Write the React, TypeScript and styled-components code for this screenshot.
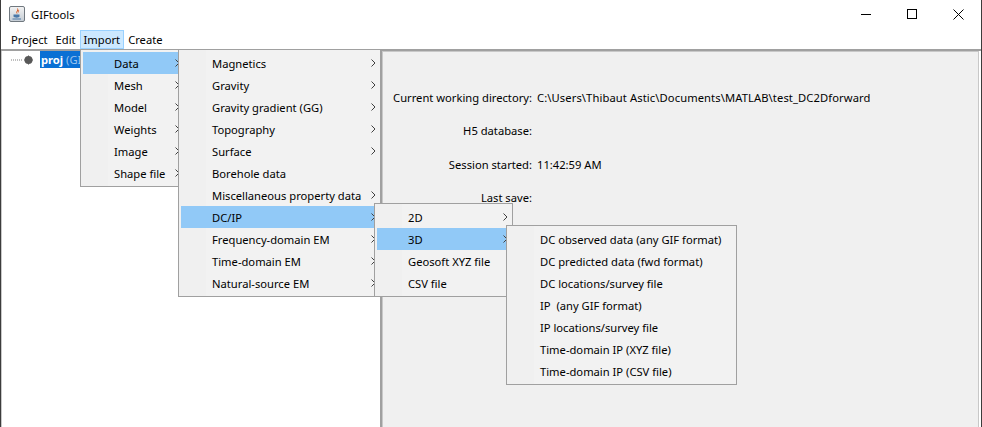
import React from "react";
import styled, { createGlobalStyle } from "styled-components";

const GlobalStyle = createGlobalStyle`
	html, body {
		margin: 0;
		padding: 0;
		background: #fff;
	}
	body {
		font-family: "Noto Sans", "Open Sans", sans-serif;
		font-size: 11.2px;
		color: #000;
	}
`;

const Window = styled.div`
	position: relative;
	width: 982px;
	height: 427px;
	box-sizing: border-box;
	display: flex;
	flex-direction: column;
	overflow: hidden;
	border-left: 1px solid #3c3c3c;
	border-right: 1px solid #3c3c3c;
	background: #fff;
`;

const TitleBar = styled.div`
	height: 30px;
	box-sizing: border-box;
	display: flex;
	align-items: center;
	padding: 0 0 2px 8px;
	flex: none;
`;

const Title = styled.span`
	margin-left: 6px;
`;

const WindowButtons = styled.div`
	margin-left: auto;
	display: flex;
`;

const WindowButton = styled.div`
	width: 46px;
	height: 28px;
	display: flex;
	align-items: center;
	justify-content: center;
`;

const MenuBar = styled.div`
	height: 19px;
	display: flex;
	align-items: center;
	padding-left: 6px;
	flex: none;
`;

const MenuTitle = styled.div<{ $open?: boolean }>`
	height: 19px;
	line-height: 18px;
	padding: 0 3px;
	box-sizing: border-box;
	border: 1px solid ${(p) => (p.$open ? "#99d1ff" : "transparent")};
	background: ${(p) => (p.$open ? "#cce8ff" : "transparent")};
`;

const Split = styled.div`
	flex: 1;
	display: flex;
	border-top: 2px solid #a0a0a0;
	min-height: 0;
`;

const TreePane = styled.div`
	width: 381px;
	box-sizing: border-box;
	flex: none;
	background: #fff;
	padding: 0 0 0 8px;
	border-left: 1px solid #c8c8c8;
	border-right: 2px solid #a0a0a0;
	display: flex;
	align-items: flex-start;
`;

const TreeRow = styled.div`
	display: flex;
	align-items: center;
	height: 17px;
`;

const TreeLabel = styled.span`
	background: #0a70d4;
	color: #fff;
	font-weight: 700;
	line-height: 17px;
	padding: 0 1px;
	margin-left: 1px;
`;

const TreeHint = styled.span`
	color: #9cc4ee;
	font-weight: 400;
`;

const InfoPane = styled.div`
	flex: 1;
	background: #f0f0f0;
	border: 1px solid #c8c8c8;
	border-bottom: none;
	margin-right: 2px;
	padding-top: 37px;
	display: flex;
	flex-direction: column;
`;

const InfoRow = styled.div`
	display: flex;
	height: 33.4px;
`;

const InfoLabel = styled.span`
	width: 149px;
	text-align: right;
	flex: none;
	line-height: 18px;
`;

const InfoValue = styled.span`
	margin-left: 5px;
	width: 333px;
	overflow: hidden;
	white-space: nowrap;
	line-height: 18px;
`;

const PathValue = styled(InfoValue)`
	letter-spacing: 0.1px;
`;

const Popup = styled.div<{ $left: number; $top: number; $width: number }>`
	position: absolute;
	left: ${(p) => p.$left}px;
	top: ${(p) => p.$top}px;
	width: ${(p) => p.$width}px;
	box-sizing: border-box;
	padding: 2px;
	background: linear-gradient(to right, #f0f0f0 27px, #f2f2f2 27px);
	border: 1px solid #a0a0a0;
`;

const Item = styled.div<{ $active?: boolean }>`
	position: relative;
	height: 22px;
	line-height: 24px;
	padding-left: 31px;
	white-space: pre;
	background: ${(p) => (p.$active ? "#91c9f7" : "transparent")};
`;

const Chevron = styled.svg`
	position: absolute;
	right: 2px;
	top: 7px;
	width: 5px;
	height: 8px;
`;

const Arrow = () => (
	<Chevron viewBox="0 0 5 8">
		<path d="M0.5 0.5L4 4L0.5 7.5" fill="none" stroke="#404040" strokeWidth="1" />
	</Chevron>
);

const JavaIcon = () => (
	<svg width="16" height="16" viewBox="0 0 16 16">
		<defs>
			<linearGradient id="frame" x1="0" y1="0" x2="0" y2="1">
				<stop offset="0" stopColor="#f4f4f4" />
				<stop offset="1" stopColor="#c4ccd4" />
			</linearGradient>
		</defs>
		<rect x="0.5" y="0.5" width="15" height="15" rx="1.5" fill="url(#frame)" stroke="#70787f" />
		<path d="M8.5 2.5C10 4.5 6.5 5.5 8 7.5M10 4C9 5 9 6 10 6.5" fill="none" stroke="#d9602a" strokeWidth="1" />
		<path d="M4.5 8.5H10.5V10.5C10.5 12 5 12 4.5 10.5Z" fill="#4a78a8" />
		<path d="M3.5 13H12" stroke="#4a78a8" strokeWidth="1" />
	</svg>
);

const TreeNode = () => (
	<svg width="29" height="12" viewBox="0 0 29 12">
		<path d="M1 6H13" stroke="#808080" strokeDasharray="1 1" />
		<circle cx="18.5" cy="6" r="4" fill="#585858" />
		<path d="M18.5 1.5V10.5M14 6H23" stroke="#585858" strokeWidth="1" />
	</svg>
);

type Entry = { label: string; sub?: boolean; active?: boolean };

const Menu = ({ left, top, width, items }: { left: number; top: number; width: number; items: Entry[] }) => (
	<Popup $left={left} $top={top} $width={width}>
		{items.map((it) => (
			<Item key={it.label} $active={it.active}>
				{it.label}
				{it.sub && <Arrow />}
			</Item>
		))}
	</Popup>
);

const importItems: Entry[] = [
	{ label: "Data", sub: true, active: true },
	{ label: "Mesh", sub: true },
	{ label: "Model", sub: true },
	{ label: "Weights", sub: true },
	{ label: "Image", sub: true },
	{ label: "Shape file", sub: true },
];

const dataItems: Entry[] = [
	{ label: "Magnetics", sub: true },
	{ label: "Gravity", sub: true },
	{ label: "Gravity gradient (GG)", sub: true },
	{ label: "Topography", sub: true },
	{ label: "Surface", sub: true },
	{ label: "Borehole data" },
	{ label: "Miscellaneous property data", sub: true },
	{ label: "DC/IP", sub: true, active: true },
	{ label: "Frequency-domain EM", sub: true },
	{ label: "Time-domain EM", sub: true },
	{ label: "Natural-source EM", sub: true },
];

const dcipItems: Entry[] = [
	{ label: "2D", sub: true },
	{ label: "3D", sub: true, active: true },
	{ label: "Geosoft XYZ file" },
	{ label: "CSV file" },
];

const dimItems: Entry[] = [
	{ label: "DC observed data (any GIF format)" },
	{ label: "DC predicted data (fwd format)" },
	{ label: "DC locations/survey file" },
	{ label: "IP  (any GIF format)" },
	{ label: "IP locations/survey file" },
	{ label: "Time-domain IP (XYZ file)" },
	{ label: "Time-domain IP (CSV file)" },
];

const App: React.FC = () => {
	return (
		<>
			<GlobalStyle />
			<Window>
				<TitleBar>
					<JavaIcon />
					<Title>GIFtools</Title>
					<WindowButtons>
						<WindowButton>
							<svg width="10" height="10" viewBox="0 0 10 10">
								<path d="M0 5.5H10" stroke="#000" />
							</svg>
						</WindowButton>
						<WindowButton>
							<svg width="10" height="10" viewBox="0 0 10 10">
								<rect x="0.5" y="0.5" width="9" height="9" fill="none" stroke="#000" />
							</svg>
						</WindowButton>
						<WindowButton>
							<svg width="11" height="11" viewBox="0 0 11 11">
								<path d="M0.5 0.5L10.5 10.5M10.5 0.5L0.5 10.5" stroke="#000" />
							</svg>
						</WindowButton>
					</WindowButtons>
				</TitleBar>
				<MenuBar>
					<MenuTitle>Project</MenuTitle>
					<MenuTitle>Edit</MenuTitle>
					<MenuTitle $open>Import</MenuTitle>
					<MenuTitle>Create</MenuTitle>
				</MenuBar>
				<Split>
					<TreePane>
						<TreeRow>
							<TreeNode />
							<TreeLabel>
								proj <TreeHint>(GIFtools</TreeHint>
							</TreeLabel>
						</TreeRow>
					</TreePane>
					<InfoPane>
						<InfoRow>
							<InfoLabel>Current working directory:</InfoLabel>
							<PathValue>C:\Users\Thibaut Astic\Documents\MATLAB\test_DC2Dforward</PathValue>
						</InfoRow>
						<InfoRow>
							<InfoLabel>H5 database:</InfoLabel>
						</InfoRow>
						<InfoRow>
							<InfoLabel>Session started:</InfoLabel>
							<InfoValue>11:42:59 AM</InfoValue>
						</InfoRow>
						<InfoRow>
							<InfoLabel>Last save:</InfoLabel>
						</InfoRow>
					</InfoPane>
				</Split>
				<Menu left={79} top={49} width={105} items={importItems} />
				<Menu left={177} top={49} width={203} items={dataItems} />
				<Menu left={373} top={203} width={139} items={dcipItems} />
				<Menu left={505} top={225} width={231} items={dimItems} />
			</Window>
		</>
	);
};

export default App;
